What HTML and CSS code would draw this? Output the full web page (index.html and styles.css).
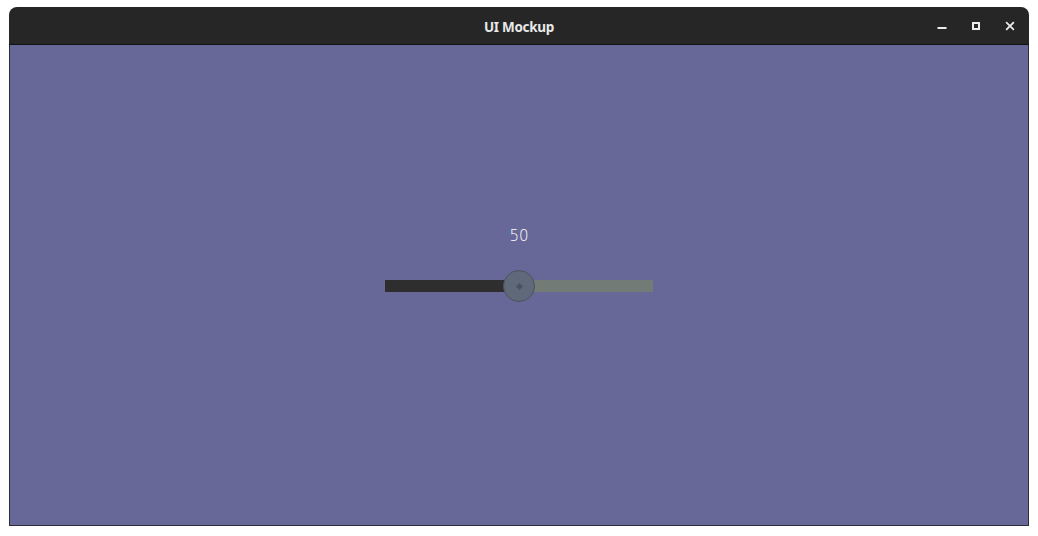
FILE: index.html
```html
<!DOCTYPE html>
<html lang="en">
<head>
<meta charset="utf-8">
<title>UI Mockup</title>
<link rel="stylesheet" href="styles.css">
</head>
<body>
<div class="window">
  <header class="titlebar">
    <div class="spacer"></div>
    <div class="title">UI Mockup</div>
    <div class="controls">
      <span class="ctl"><svg width="16" height="16" viewBox="0 0 16 16"><rect x="3.5" y="9" width="9" height="2" fill="currentColor"/></svg></span>
      <span class="ctl"><svg width="16" height="16" viewBox="0 0 16 16"><rect x="5" y="5" width="6" height="6" fill="none" stroke="currentColor" stroke-width="2"/></svg></span>
      <span class="ctl"><svg width="16" height="16" viewBox="0 0 16 16"><path d="M4.8 4.8 L11.2 11.2 M11.2 4.8 L4.8 11.2" stroke="currentColor" stroke-width="1.8" stroke-linecap="square"/></svg></span>
    </div>
  </header>
  <main class="content">
    <div class="group">
      <div class="value">50</div>
      <div class="slider">
        <div class="track">
          <div class="fill"></div>
          <div class="rest"></div>
        </div>
        <div class="handle"><span class="dot"></span></div>
      </div>
    </div>
  </main>
</div>
</body>
</html>
```
FILE: styles.css
```css
html, body {
  margin: 0;
  padding: 0;
  background: #ffffff;
}
body {
  padding: 7px 9px;
  font-family: "Noto Sans", "Open Sans", sans-serif;
}
.window {
  width: 1020px;
  height: 519px;
  display: flex;
  flex-direction: column;
  border-radius: 8px 8px 0 0;
  overflow: hidden;
}
.titlebar {
  height: 37px;
  background: #262626;
  border-bottom: 1px solid #121212;
  display: grid;
  grid-template-columns: 1fr auto 1fr;
  align-items: center;
  color: #e8e8e8;
}
.title {
  font-size: 13.5px;
  font-weight: 700;
  letter-spacing: -0.3px;
  padding-top: 2px;
}
.controls {
  display: flex;
  justify-content: flex-end;
  gap: 10px;
  padding-right: 7px;
}
.ctl {
  width: 24px;
  height: 24px;
  display: flex;
  align-items: center;
  justify-content: center;
  color: #ececec;
}
.content {
  flex: 1;
  background: #676798;
  border: 1px solid #2d2d3a;
  border-top: none;
  display: flex;
  align-items: center;
  justify-content: center;
}
.group {
  display: flex;
  flex-direction: column;
  align-items: center;
  padding-bottom: 43px;
}
.value {
  color: #ffffff;
  font-family: "DejaVu Sans", sans-serif;
  font-size: 15px;
  font-weight: 200;
  line-height: 20px;
  height: 20px;
  padding-top: 1px;
  margin-bottom: 24px;
}
.slider {
  position: relative;
  width: 268px;
  height: 32px;
  display: flex;
  align-items: center;
}
.track {
  width: 100%;
  height: 12px;
  display: flex;
}
.fill {
  width: 50%;
  background: #2e2e2e;
}
.rest {
  flex: 1;
  background: #727b76;
}
.handle {
  position: absolute;
  left: calc(50% - 16px);
  top: 0;
  width: 30px;
  height: 30px;
  border-radius: 50%;
  background: #5f6979;
  border: 1px solid #4c5363;
  display: flex;
  align-items: center;
  justify-content: center;
}
.dot {
  width: 5px;
  height: 5px;
  background: #4a5262;
  transform: rotate(45deg);
}
```
